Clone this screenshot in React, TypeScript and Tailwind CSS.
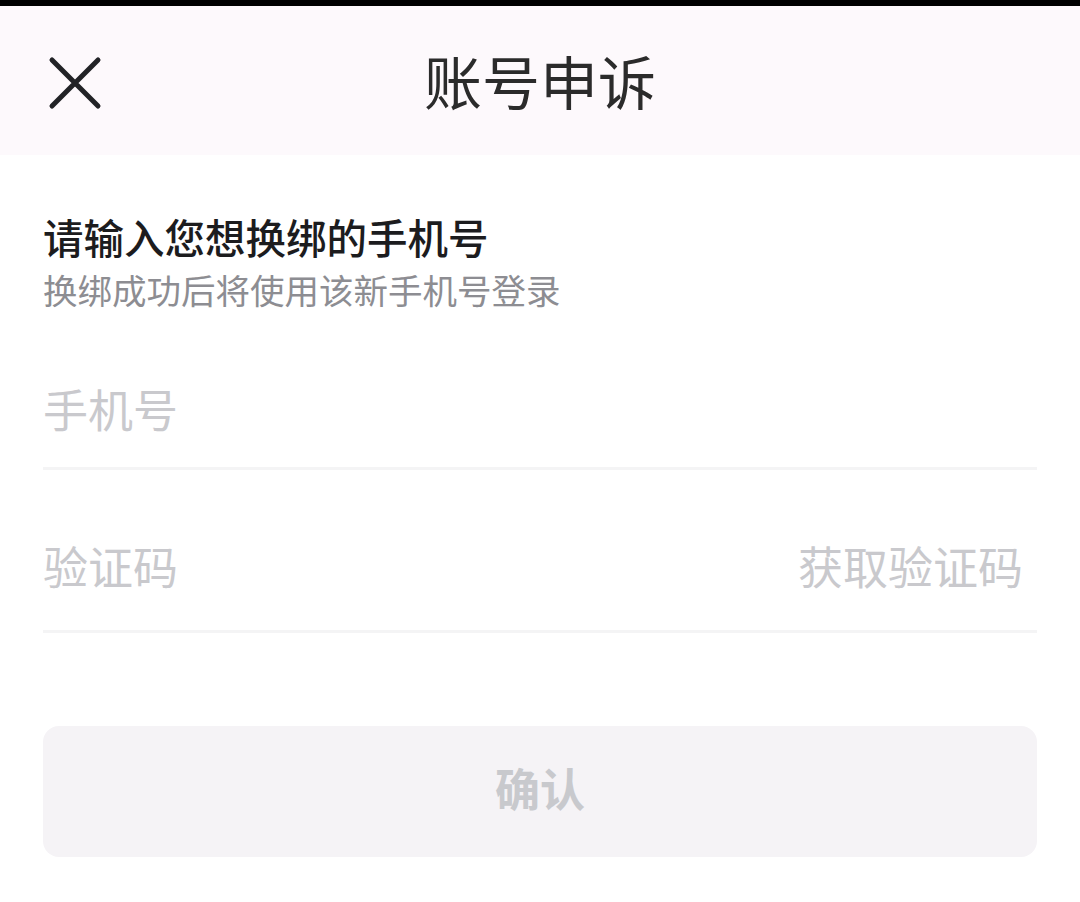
import React from "react";

export default function App() {
  const font = { fontFamily: '"Noto Sans CJK SC", "Noto Sans", sans-serif' };
  return (
    <div className="w-[1080px] h-[902px] bg-white flex flex-col" style={font}>
      <div className="h-[6px] bg-black" />
      <div className="h-[149px] bg-[#fdf9fc] relative flex items-center justify-center">
        <div className="absolute left-[46px] top-[48px] w-[58px] h-[58px] flex items-center justify-center">
          <svg width="58" height="58" viewBox="0 0 58 58" fill="none">
            <path d="M6 6 L52 52 M52 6 L6 52" stroke="#222326" strokeWidth="5" strokeLinecap="round" />
          </svg>
        </div>
        <div className="text-[58px] leading-none text-[#2b2b2b] -mt-[2px]">账号申诉</div>
      </div>
      <div className="px-[43px] flex flex-col">
        <div className="mt-[56px] text-[40.5px] leading-[52px] font-medium text-[#1c1c1e]">请输入您想换绑的手机号</div>
        <div className="mt-[4px] text-[34.5px] leading-[44px] text-[#8d8d92]">换绑成功后将使用该新手机号登录</div>
        <div className="mt-[52px] h-[107px] flex items-center border-b-[3px] border-[#f4f4f5]">
          <span className="text-[45px] leading-none text-[#c9c9cd] -mt-[14px]">手机号</span>
        </div>
        <div className="h-[163px] flex items-center justify-between border-b-[3px] border-[#f4f4f5]">
          <span className="text-[45px] leading-none text-[#c9c9cd] mt-[30px]">验证码</span>
          <span className="text-[45px] leading-none text-[#c9c9cd] mt-[30px] mr-[14px]">获取验证码</span>
        </div>
        <div className="mt-[93px] h-[131px] rounded-[16px] bg-[#f5f3f6] flex items-center justify-center">
          <span className="text-[45px] leading-none font-bold text-[#c8c9cd] -mt-[8px]">确认</span>
        </div>
      </div>
    </div>
  );
}
